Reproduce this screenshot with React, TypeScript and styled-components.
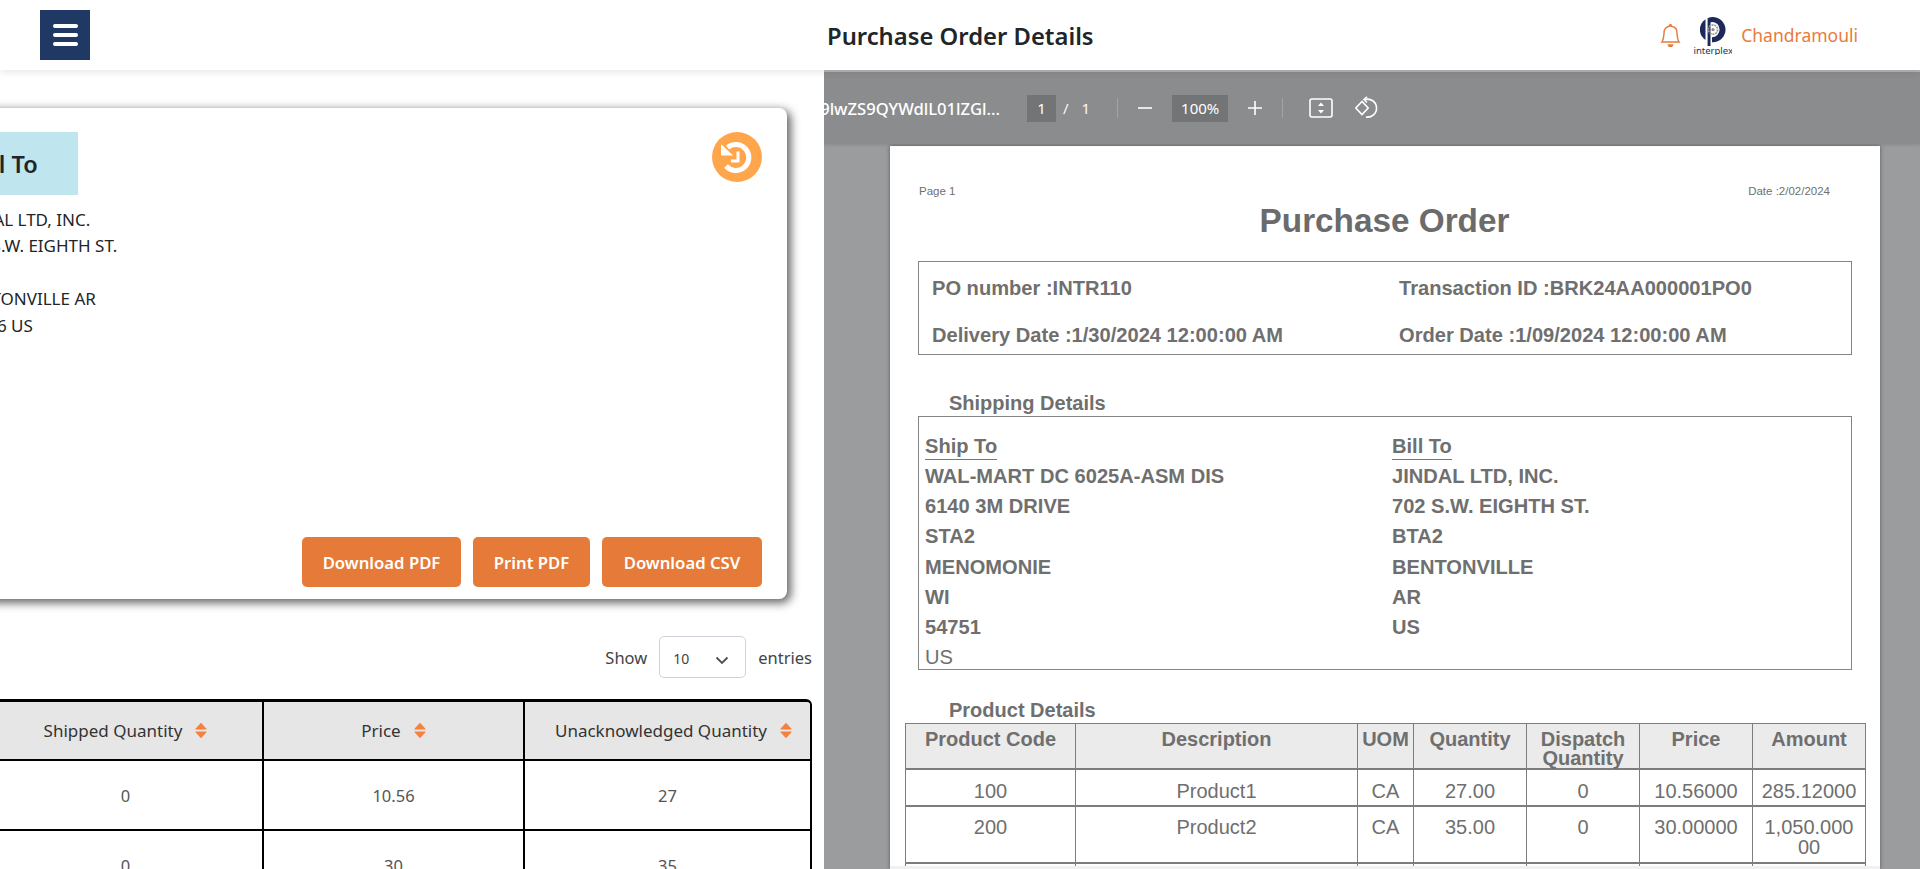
import React from "react";
import styled, { createGlobalStyle } from "styled-components";
import { BsBell } from "react-icons/bs";

const Global = createGlobalStyle`
  html, body { margin: 0; padding: 0; height: 100%; overflow: hidden; background: #fff; }
  body { font-family: "Noto Sans", "Liberation Sans", sans-serif; color: #212529; }
  * { box-sizing: border-box; }
`;

const Shell = styled.div`
  width: 1920px; height: 869px; display: flex; flex-direction: column; overflow: hidden;
`;
const Header = styled.header`
  height: 70px; flex: none; display: flex; align-items: center; padding: 0 62px 0 40px;
  background: #fff; box-shadow: 0 2px 8px rgba(0,0,0,.1); position: relative; z-index: 2;
`;
const Burger = styled.button`
  width: 50px; height: 50px; border: 0; padding: 0 12px 0 13px; background: #1f3864;
  display: flex; flex-direction: column; justify-content: center; gap: 5px;
`;
const BurgerBar = styled.span`
  display: block; height: 4px; border-radius: 2px; background: #fff;
`;
const Title = styled.h1`
  margin: 2px 0 0 737px; font-size: 23.8px; line-height: 30px; font-weight: 600; color: #212529;
`;
const UserArea = styled.div`
  margin-left: auto; display: flex; align-items: center;
`;
const BellWrap = styled.span`
  color: #e87b3c; display: flex; font-size: 23px; margin-right: 12px;
`;
const Logo = styled.div`
  width: 38px; height: 38px; margin-top: 2px; display: flex; flex-direction: column; align-items: center; overflow: hidden;
`;
const LogoMark = styled.svg`
  width: 26px; height: 29px; flex: none;
`;
const LogoWord = styled.span`
  font-size: 9.5px; line-height: 9px; color: #1f2f55; white-space: nowrap;
`;
const UserName = styled.span`
  margin-left: 9px; font-size: 17.5px; line-height: 24px; color: #e87b3c;
`;

const Body = styled.div`
  flex: 1; min-height: 0; display: flex;
`;
const LeftPane = styled.main`
  width: 824px; flex: none; overflow: hidden; display: flex; flex-direction: column; align-items: flex-end;
  padding: 38px 12px 0 0;
`;
const Card = styled.section`
  width: 880px; flex: none; height: 491px; margin-right: 25px; background: #fff; border-radius: 8px;
  box-shadow: 3px 3px 10px 1px #666; display: flex; flex-direction: column; padding: 24px 25px 12px 30px;
`;
const CardTop = styled.div`
  display: flex; justify-content: space-between; align-items: flex-start;
`;
const Chip = styled.div`
  width: 141px; height: 63px; background: #bfe6ee; display: flex; align-items: center; padding-left: 33px;
  font-size: 23.5px; font-weight: 600; color: #212529;
`;
const RevertButton = styled.button`
  width: 50px; height: 50px; padding: 0; border: 0; border-radius: 50%; background: #ffa64d; display: flex;
`;
const Address = styled.address`
  margin: 12px 0 0 21px; font-style: normal; font-size: 17px; line-height: 26.4px; color: #212529; white-space: pre;
`;
const Actions = styled.div`
  margin-top: auto; margin-bottom: 0; display: flex; justify-content: flex-end; gap: 12px;
`;
const ActionButton = styled.button<{ $w: number }>`
  width: ${p => p.$w}px; height: 50px; border: 0; border-radius: 5px; background: #e67a38; color: #fff;
  font: 600 16.7px "Noto Sans", sans-serif; padding: 0;
`;
const EntriesRow = styled.div`
  margin-top: 37px; display: flex; align-items: center; font-size: 16.5px; color: #444;
`;
const EntriesSelect = styled.div`
  width: 87px; height: 42px; margin: 0 12px 0 12px; border: 1px solid #ced4da; border-radius: 5px; display: flex;
  align-items: center; justify-content: space-between; padding: 2px 15px 0 13px; font-size: 14px; color: #444;
`;
const Chevron = styled.svg`
  margin-top: 4px; flex: none;
`;
const TableWrap = styled.div`
  margin-top: 21px; width: 823px; flex: none; border: solid #000; border-width: 3px 2px 0 0; border-top-right-radius: 6px; overflow: hidden;
`;
const DataTable = styled.table`
  width: 100%; table-layout: fixed; border-collapse: collapse; font-size: 16.5px;
`;
const HeadCell = styled.th`
  height: 58px; padding: 0; background: #e6e6e6; font-weight: 400; font-size: 17px; color: #333;
  border-right: 2px solid #000; border-bottom: 2px solid #000;
  &:last-child { border-right: 0; padding-left: 12px; }
`;
const HeadInner = styled.span`
  display: inline-flex; align-items: center; gap: 13px;
`;
const DataCell = styled.td`
  height: 70px; padding: 0; text-align: center; color: #555;
  border-right: 2px solid #000; border-bottom: 2px solid #000;
  &:last-child { border-right: 0; }
`;

const PdfPane = styled.aside`
  flex: 1; min-width: 0; display: flex; flex-direction: column; overflow: hidden; background: #9b9c9e;
  border-top: 2px solid #b5b5b5;
`;
const PdfToolbar = styled.div`
  height: 72px; flex: none; display: flex; align-items: center; background: #8b8c8e; color: #fff;
  box-shadow: 0 1px 3px rgba(0,0,0,.12); font-size: 14px; position: relative; z-index: 1;
`;
const FileName = styled.div`
  width: 176px; flex: none; display: flex; justify-content: flex-end; overflow: hidden; white-space: nowrap; font-weight: 500; font-size: 16.6px;
`;
const ToolBox = styled.span<{ $w: number; $ml: number }>`
  width: ${p => p.$w}px; height: 27px; margin-left: ${p => p.$ml}px; flex: none; background: #737475; display: flex;
  align-items: center; justify-content: center; font-size: 15px;
`;
const ToolText = styled.span<{ $ml: number }>`
  margin-left: ${p => p.$ml}px; flex: none; opacity: .95; font-size: 15px;
`;
const ToolDivider = styled.span<{ $ml: number }>`
  width: 1px; height: 20px; margin-left: ${p => p.$ml}px; background: #a2a3a5; flex: none;
`;
const ToolIcon = styled.svg<{ $ml: number }>`
  margin-left: ${p => p.$ml}px; flex: none; display: block;
`;
const PdfScroll = styled.div`
  flex: 1; min-height: 0; padding: 2px 40px 0 66px;
`;
const PdfPage = styled.article`
  height: 723px; overflow: hidden; background: #fff; box-shadow: 0 0 4px rgba(0,0,0,.45); border-bottom: 3px solid #f1f1f1;
  padding: 38px 15px 0; font-family: "Liberation Sans", Arial, sans-serif; color: #6f6f6f;
`;
const PageMeta = styled.div`
  display: flex; justify-content: space-between; padding: 0 35px 0 14px; font-size: 11.5px; line-height: 14px;
`;
const DocTitle = styled.h2`
  margin: 3px 0 0; text-align: center; font-size: 33.3px; line-height: 40px; font-weight: 700; color: #6b6b6b; padding-right: 1px;
`;
const InfoBox = styled.div`
  margin: 20px 13px 0; height: 94px; border: 1px solid #858585; padding: 14px 0 0 13px;
  display: grid; grid-template-columns: 467px 1fr; grid-auto-rows: 24px; row-gap: 23px;
  font-size: 20.1px; line-height: 24px; font-weight: 700; white-space: nowrap;
`;
const SectionTitle = styled.h3<{ $mt: number }>`
  margin: ${p => p.$mt}px 0 0 44px; font-size: 20px; line-height: 24px; font-weight: 700;
`;
const ShipBox = styled.div`
  margin: 1px 13px 0; height: 254px; border: 1px solid #858585; padding: 17px 0 0 6px;
  display: grid; grid-template-columns: 467px 1fr;
  font-size: 20.1px; line-height: 30.2px; font-weight: 700;
`;
const PartyHead = styled.div`
  display: table; line-height: 24px; padding-bottom: 1px; border-bottom: 1px solid #777; margin-bottom: 1px;
`;
const PlainLine = styled.div`
  font-weight: 400;
`;
const ProductTable = styled.table`
  margin-top: 1px; width: 960px; table-layout: fixed; border-collapse: collapse; font-size: 20px; line-height: 20px; color: #6f6f6f;
  border: 1px solid #7d7d7d;
`;
const ProdHead = styled.th`
  height: 45px; padding: 6px 4px 0; vertical-align: top; font-weight: 700; line-height: 19px; background: #ebebeb;
  border: 1px solid #7d7d7d;
  border-bottom-width: 2px;
`;
const ProdCell = styled.td<{ $pt: number; $h: number }>`
  height: ${p => p.$h}px; padding: ${p => p.$pt}px 6px 0; vertical-align: top; text-align: center; font-size: 20px; word-break: break-all;
  border: 1px solid #7d7d7d;
  border-bottom-width: 2px;
`;

const SortIcon = () => (
  <svg width="12" height="17" viewBox="0 0 12 17" aria-hidden>
    <path d="M6 .8 11.3 6.6a.5.5 0 0 1-.4.9H1.1a.5.5 0 0 1-.4-.9z" fill="#f5813d" />
    <path d="M6 16.2.7 10.4a.5.5 0 0 1 .4-.9h9.8a.5.5 0 0 1 .4.9z" fill="#f5813d" />
  </svg>
);

const party = (name: string, lines: string[]) => (
  <div>
    <PartyHead>{name}</PartyHead>
    {lines.map(l => <div key={l}>{l}</div>)}
  </div>
);

const rows = [
  ["100", "Product1", "CA", "27.00", "0", "10.56000", "285.12000"],
  ["200", "Product2", "CA", "35.00", "0", "30.00000", "1,050.00000"],
];
const blankRow = [0, 1, 2, 3, 4, 5, 6];

export default function App() {
  return (
    <Shell>
      <Global />
      <Header>
        <Burger aria-label="menu"><BurgerBar /><BurgerBar /><BurgerBar /></Burger>
        <Title>Purchase Order Details</Title>
        <UserArea>
          <BellWrap><BsBell /></BellWrap>
          <Logo>
            <LogoMark viewBox="0 0 26 29">
              <path d="M5.5 2.2A12.4 12.4 0 0 0 5.5 23z" fill="#1b2a5b" />
              <path d="M7.6 1.2A12.6 12.6 0 1 1 12 25.2v-5a7.6 7.6 0 1 0-.1-15.3 3 3 0 0 0-1.4.5V29H7.6z" fill="#1b2a5b" />
              <circle cx="13" cy="12.6" r="4.6" fill="none" stroke="#9c9c9c" strokeWidth="1.8" strokeDasharray="2 .8" />
              <circle cx="13" cy="12.6" r="1.6" fill="#8a8a8a" />
            </LogoMark>
            <LogoWord>interplex</LogoWord>
          </Logo>
          <UserName>Chandramouli</UserName>
        </UserArea>
      </Header>
      <Body>
        <LeftPane>
          <Card>
            <CardTop>
              <Chip>Bill To</Chip>
              <RevertButton aria-label="history">
                <svg width="50" height="50" viewBox="0 0 50 50">
                  <path d="M15.5 15.5A13 13 0 1 1 14 34" fill="none" stroke="#fff" strokeWidth="5" />
                  <path d="M9 12 9 23.5 21 23.5z" fill="#fff" />
                  <path d="M26 19.5V29H19" fill="none" stroke="#fff" strokeWidth="3" />
                </svg>
              </RevertButton>
            </CardTop>
            <Address>{"JINDAL LTD, INC.\n702 S.W. EIGHTH ST.\nBTA2\nBENTONVILLE AR\n72716 US"}</Address>
            <Actions>
              <ActionButton $w={159}>Download PDF</ActionButton>
              <ActionButton $w={117}>Print PDF</ActionButton>
              <ActionButton $w={160}>Download CSV</ActionButton>
            </Actions>
          </Card>
          <EntriesRow>
            <span>Show</span>
            <EntriesSelect>
              <span>10</span>
              <Chevron width="16" height="16" viewBox="0 0 16 16" aria-hidden>
                <path d="M2.500 5.500 8 11l5.500-5.500" fill="none" stroke="#4a5058" strokeWidth="1.800" />
              </Chevron>
            </EntriesSelect>
            <span>entries</span>
          </EntriesRow>
          <TableWrap>
            <DataTable>
              <colgroup><col style={{ width: 274 }} /><col style={{ width: 261 }} /><col /></colgroup>
              <thead>
                <tr>
                  {["Shipped Quantity", "Price", "Unacknowledged Quantity"].map(h => (
                    <HeadCell key={h}><HeadInner>{h}<SortIcon /></HeadInner></HeadCell>
                  ))}
                </tr>
              </thead>
              <tbody>
                <tr><DataCell>0</DataCell><DataCell>10.56</DataCell><DataCell>27</DataCell></tr>
                <tr><DataCell>0</DataCell><DataCell>30</DataCell><DataCell>35</DataCell></tr>
              </tbody>
            </DataTable>
          </TableWrap>
        </LeftPane>
        <PdfPane>
          <PdfToolbar>
            <FileName>aW52b2ljZS9lwZS9QYWdlL01lZGl...</FileName>
            <ToolBox $w={29} $ml={27}>1</ToolBox>
            <ToolText $ml={7}>/</ToolText>
            <ToolText $ml={13}>1</ToolText>
            <ToolDivider $ml={27} />
            <ToolIcon $ml={19} width="16" height="16" viewBox="0 0 16 16"><path d="M1 8h14" stroke="#fff" strokeWidth="1.6" /></ToolIcon>
            <ToolBox $w={56} $ml={19}>100%</ToolBox>
            <ToolIcon $ml={19} width="16" height="16" viewBox="0 0 16 16"><path d="M1 8h14M8 1v14" stroke="#fff" strokeWidth="1.6" /></ToolIcon>
            <ToolDivider $ml={19} />
            <ToolIcon $ml={26} width="24" height="20" viewBox="0 0 24 20">
              <rect x="1" y="1" width="22" height="18" rx="2" fill="none" stroke="#fff" strokeWidth="1.6" />
              <path d="M12 4.500 15 8H9zM12 15.500 9 12h6z" fill="#fff" />
            </ToolIcon>
            <ToolIcon $ml={21} width="24" height="24" viewBox="0 0 24 24">
              <path d="M8 5.500 1.800 12 8 18.500 14.200 12z" fill="none" stroke="#fff" strokeWidth="1.6" />
              <path d="M11 3.500a9 9 0 1 1 1 17.500" fill="none" stroke="#fff" strokeWidth="1.6" />
              <path d="M13 .8 10 3.500l3 2.800" fill="none" stroke="#fff" strokeWidth="1.6" />
            </ToolIcon>
          </PdfToolbar>
          <PdfScroll>
            <PdfPage>
              <PageMeta><span>Page 1</span><span>Date :2/02/2024</span></PageMeta>
              <DocTitle>Purchase Order</DocTitle>
              <InfoBox>
                <span>PO number :INTR110</span>
                <span>Transaction ID :BRK24AA000001PO0</span>
                <span>Delivery Date :1/30/2024 12:00:00 AM</span>
                <span>Order Date :1/09/2024 12:00:00 AM</span>
              </InfoBox>
              <SectionTitle $mt={36}>Shipping Details</SectionTitle>
              <ShipBox>
                <div>
                  {party("Ship To", ["WAL-MART DC 6025A-ASM DIS", "6140 3M DRIVE", "STA2", "MENOMONIE", "WI", "54751"])}
                  <PlainLine>US</PlainLine>
                </div>
                {party("Bill To", ["JINDAL LTD, INC.", "702 S.W. EIGHTH ST.", "BTA2", "BENTONVILLE", "AR", "US"])}
              </ShipBox>
              <SectionTitle $mt={28}>Product Details</SectionTitle>
              <ProductTable>
                <colgroup>
                  {[170, 282, 56, 113, 113, 113, 113].map((w, i) => <col key={i} style={{ width: w }} />)}
                </colgroup>
                <thead>
                  <tr>
                    {["Product Code", "Description", "UOM", "Quantity", "Dispatch Quantity", "Price", "Amount"].map(h => (
                      <ProdHead key={h}>{h}</ProdHead>
                    ))}
                  </tr>
                </thead>
                <tbody>
                  {rows.map((r, i) => (
                    <tr key={r[0]}>
                      {r.map((c, j) => <ProdCell key={j} $pt={i === 0 ? 11 : 10} $h={i === 0 ? 37 : 57}>{c}</ProdCell>)}
                    </tr>
                  ))}
                  <tr>{blankRow.map(k => <ProdCell key={k} $pt={10} $h={40} />)}</tr>
                </tbody>
              </ProductTable>
            </PdfPage>
          </PdfScroll>
        </PdfPane>
      </Body>
    </Shell>
  );
}
